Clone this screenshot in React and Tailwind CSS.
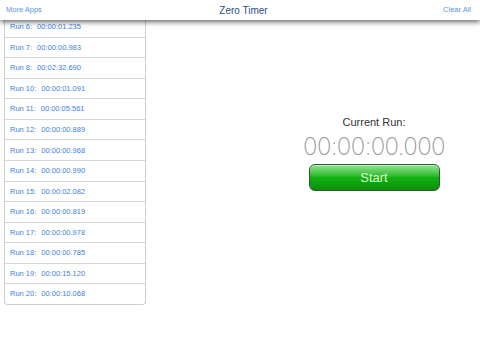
import React from "react";

const runs = [
  ["6", "00:00:01.235"],
  ["7", "00:00:00.983"],
  ["8", "00:02:32.690"],
  ["10", "00:00:01.091"],
  ["11", "00:00:05.561"],
  ["12", "00:00:00.889"],
  ["13", "00:00:00.968"],
  ["14", "00:00:00.990"],
  ["15", "00:00:02.082"],
  ["16", "00:00:00.819"],
  ["17", "00:00:00.978"],
  ["18", "00:00:00.785"],
  ["19", "00:00:15.120"],
  ["20", "00:00:10.068"],
];

const App = () => {
  return (
    <div
      className="w-[480px] h-[351px] bg-white overflow-hidden"
      style={{ fontFamily: '"Liberation Sans", Arial, sans-serif' }}
    >
      <div className="relative z-10 h-[20px] bg-white flex items-center justify-between px-[6px] shadow-[0_2px_5px_rgba(0,0,0,0.6)]">
        <span className="text-[7.5px] text-[#5a96e0]">More Apps</span>
        <span className="text-[10px] text-[#2c4f8c] ml-[2px]">Zero Timer</span>
        <span className="text-[7.5px] text-[#5a96e0] mr-[3px]">Clear All</span>
      </div>

      <div className="flex">
        <div className="ml-[4px] -mt-[4px] w-[142px] border border-t-0 border-[#cfcfcf] rounded-b-[4px] bg-white">
          {runs.map(([n, t], i) => (
            <div
              key={n}
              className={
                "h-[20.57px] flex items-center pl-[5px] text-[7.5px] text-[#3d82dc] " +
                (i > 0 ? "border-t border-[#d6d6d6]" : "")
              }
            >
              <span>Run {n}:</span>
              <span className="ml-[5px]">{t}</span>
            </div>
          ))}
        </div>

        <div className="flex-1 flex flex-col items-center pl-[122px] pt-[97px]">
          <div className="text-[11px] text-[#333] leading-none">Current Run:</div>
          <div
            className="mt-[7px] text-[24px] leading-none font-extralight text-[#9a9a9a] tracking-[-0.6px]"
            style={{ fontFamily: 'Inter, "Liberation Sans", sans-serif' }}
          >
            00:00:00.000
          </div>
          <button className="mt-[5px] w-[131px] h-[27px] rounded-[6px] border border-[#2f5a2f] bg-gradient-to-b from-[#8be88b] via-[#12b212] to-[#0a8f0a] flex items-center justify-center shadow-[inset_0_1px_0_rgba(255,255,255,0.5)]">
            <span className="text-[13px] text-[#dcffd4]">Start</span>
          </button>
        </div>
      </div>
    </div>
  );
};

export default App;
